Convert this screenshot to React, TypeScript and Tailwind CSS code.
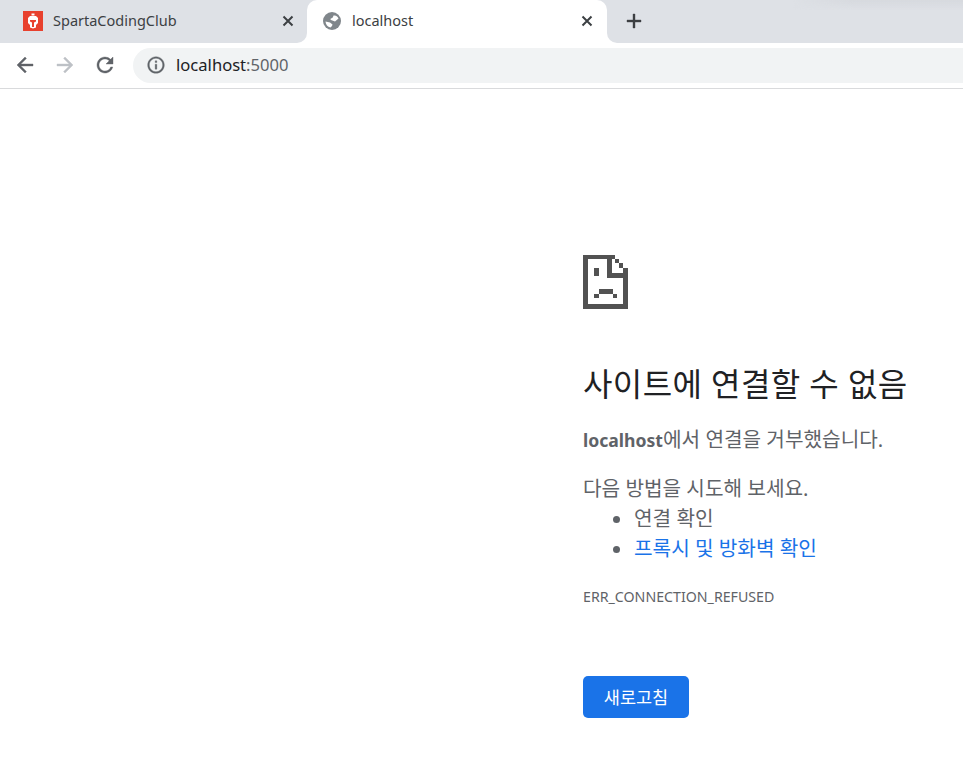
const FONT = '"Noto Sans", "Noto Sans CJK KR", sans-serif';

function Mat({ d, className }: { d: string; className: string }) {
  return (
    <svg viewBox="0 0 24 24" className={className} fill="currentColor" stroke="currentColor" strokeWidth={0.4}>
      <path d={d} />
    </svg>
  );
}

const BACK = 'M20 11H7.83l5.59-5.59L12 4l-8 8 8 8 1.41-1.41L7.83 13H20v-2z';
const FORWARD = 'M4 11h12.17l-5.59-5.59L12 4l8 8-8 8-1.41-1.41L16.17 13H4v-2z';
const RELOAD = 'M17.65 6.35A7.958 7.958 0 0 0 12 4c-4.42 0-7.99 3.58-7.99 8s3.57 8 7.99 8c3.73 0 6.84-2.55 7.73-6h-2.08A5.99 5.99 0 0 1 12 18c-3.31 0-6-2.69-6-6s2.69-6 6-6c1.66 0 3.14.69 4.22 1.78L13 11h7V4l-2.35 2.35z';
const INFO = 'M11 7h2v2h-2zm0 4h2v6h-2zm1-9C6.48 2 2 6.48 2 12s4.48 10 10 10 10-4.48 10-10S17.52 2 12 2zm0 18c-4.41 0-8-3.59-8-8s3.59-8 8-8 8 3.59 8 8-3.59 8-8 8z';
const PLUS = 'M19 13h-6v6h-2v-6H5v-2h6V5h2v6h6v2z';

function CloseIcon() {
  return (
    <svg viewBox="0 0 12 12" className="w-3 h-3 shrink-0 text-[#3c4043]" fill="none" stroke="currentColor" strokeWidth={2}>
      <path d="M1.5 1.5l9 9M10.5 1.5l-9 9" />
    </svg>
  );
}

function Globe() {
  return (
    <svg viewBox="0 0 18 18" className="w-[18px] h-[18px] shrink-0 text-[#80868b]">
      <circle cx="9" cy="9" r="9" fill="currentColor" />
      <path d="M10.5 3.5C13 3 15 4.5 15.5 6.5L12 9.5 8 8C7 7.3 7.5 6.5 8.5 6.3 9.8 6 10 4.8 10.5 3.5Z" fill="#fff" />
      <path d="M2.5 9.5 7 10.5 9.5 12.5 9 14 7.5 15.5C4.5 15 2.8 12.5 2.5 9.5Z" fill="#fff" />
    </svg>
  );
}

function SpartaLogo() {
  return (
    <svg viewBox="0 0 20 20" className="w-5 h-5 shrink-0">
      <rect width="20" height="20" fill="#e8412e" />
      <path d="M8.5 2.5h3v2h-3z" fill="#fff" />
      <path d="M7 5h6l2 2v5l-2 2v2.5l-3 1-3-1V14l-2-2V7z" fill="#fff" />
      <path d="M7 9h6v1.5l-2 1V16H9v-4.500l-2-1z" fill="#e8412e" />
    </svg>
  );
}

function SadPage() {
  return (
    <svg viewBox="0 0 45 54" className="w-[45px] h-[54px]" fill="#525252">
      <path d="M0 0h32v4H5v45h35V13h5v41H0z" />
      <path d="M24 4h5v14h16v5H24z" />
      <path d="M32 4h4v4h-4zM36 8h4v5h-4z" />
      <path d="M11 13h5v8h-5z" />
      <path d="M16 34h14v5H16zM11 39h5v4h-5zM30 39h4v4h-4z" />
    </svg>
  );
}

export default function App() {
  return (
    <div className="w-[963px] h-[773px] bg-white overflow-hidden flex flex-col" style={{ fontFamily: FONT }}>
      {/* tab strip: grey on top, white under the rounded tab feet */}
      <div className="h-[43px] bg-[linear-gradient(to_bottom,#dee1e6_50%,#ffffff_50%)] flex items-stretch shrink-0">
        <div className="w-[307px] bg-[#dee1e6] rounded-br-[10px] flex items-center pl-[23px] pr-[13px] pb-[1px]">
          <SpartaLogo />
          <span className="ml-[10px] text-[14.5px] text-[#3c4043] flex-1">SpartaCodingClub</span>
          <CloseIcon />
        </div>
        <div className="w-[300px] bg-white rounded-t-[10px] flex items-center pl-[16px] pr-[14px] pb-[1px]">
          <Globe />
          <span className="ml-[11px] text-[14.5px] text-[#3c4043] flex-1">localhost</span>
          <CloseIcon />
        </div>
        <div className="relative flex-1 bg-[#dee1e6] rounded-bl-[10px] flex items-center pl-[15px] pb-[1px]">
          <Mat d={PLUS} className="w-6 h-6 text-[#3c4043]" />
          {/* faint shadow along the top edge, right side */}
          <div className="absolute top-0 right-0 w-[170px] h-[10px] bg-gradient-to-b from-[#d6d9de] to-transparent [mask-image:linear-gradient(to_right,transparent,black_60px)]" />
        </div>
      </div>

      {/* toolbar */}
      <div className="h-[46px] border-b border-[#d9dadc] flex items-center shrink-0 pb-[1px]">
        <div className="flex items-center pl-[13px] gap-[16px] w-[133px]">
          <Mat d={BACK} className="w-6 h-6 text-[#5f6368]" />
          <Mat d={FORWARD} className="w-6 h-6 text-[#bdc1c6]" />
          <Mat d={RELOAD} className="w-6 h-6 text-[#5f6368]" />
        </div>
        <div className="flex-1 h-[35px] bg-[#f1f3f4] rounded-l-full flex items-center pl-[13px]">
          <Mat d={INFO} className="w-5 h-5 text-[#5f6368]" />
          <span className="ml-[10px] text-[16.6px] text-[#202124]">
            localhost<span className="text-[#5f6368]">:5000</span>
          </span>
        </div>
      </div>

      {/* error page */}
      <div className="pl-[583px] pt-[166px] flex-1 text-[#5f6368] text-[20.2px]">
        <SadPage />
        <h1 className="mt-[55px] text-[32px] leading-[40px] tracking-[0.4px] text-[#202124]">사이트에 연결할 수 없음</h1>
        <p className="mt-[21px] leading-[28px]">
          <b className="font-bold text-[17.6px]">localhost</b>에서 연결을 거부했습니다.
        </p>
        <p className="mt-[20px] leading-[28px]">다음 방법을 시도해 보세요.</p>
        <ul className="mt-[1px] list-disc pl-[51px] leading-[30px]">
          <li>연결 확인</li>
          <li className="text-[#1a73e8] marker:text-[#5f6368]">프록시 및 방화벽 확인</li>
        </ul>
        <p className="mt-[25px] text-[14.2px] leading-[18px]">ERR_CONNECTION_REFUSED</p>
        <button className="mt-[70px] w-[106px] h-[42px] rounded-[5px] bg-[#1a73e8] text-white text-[17.5px] font-normal">
          새로고침
        </button>
      </div>
    </div>
  );
}
